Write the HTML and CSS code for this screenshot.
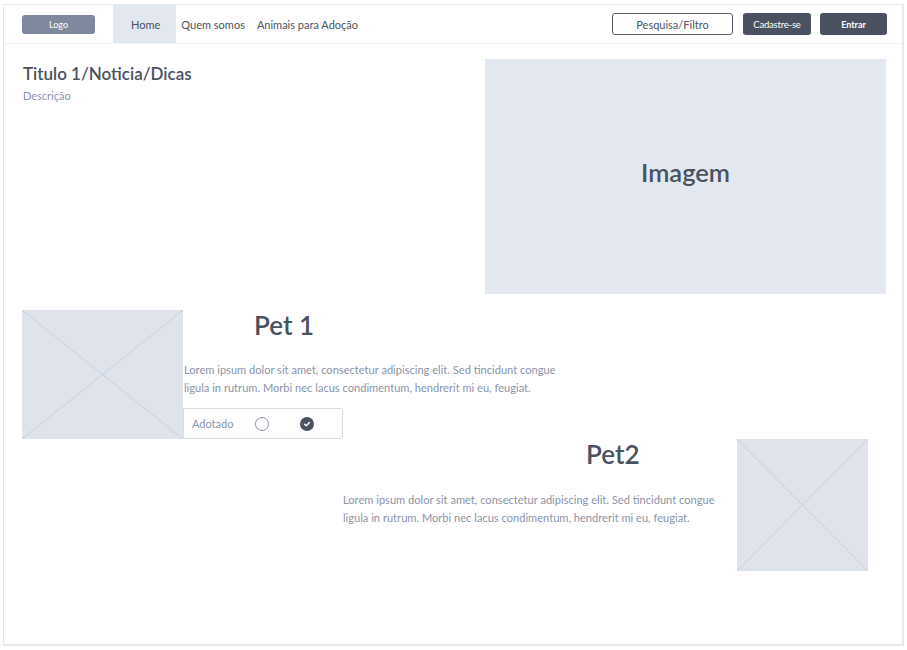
FILE: index.html
```html
<!DOCTYPE html>
<html lang="pt">
<head>
<meta charset="utf-8">
<title>Adoção de Animais</title>
<link rel="stylesheet" href="styles.css">
</head>
<body>
<div class="frame">
  <header class="nav">
    <div class="logo">Logo</div>
    <nav class="links">
      <a class="link active">Home</a>
      <a class="link">Quem somos</a>
      <a class="link">Animais para Adoção</a>
    </nav>
    <div class="actions">
      <div class="search">Pesquisa/Filtro</div>
      <div class="btn btn-signup">Cadastre-se</div>
      <div class="btn btn-login">Entrar</div>
    </div>
  </header>

  <section class="hero">
    <div class="hero-text">
      <h1 class="title">Titulo 1/Noticia/Dicas</h1>
      <p class="desc">Descrição</p>
    </div>
    <div class="hero-image">Imagem</div>
  </section>

  <section class="pet pet1">
    <div class="placeholder ph1">
      <svg viewBox="0 0 161 129" preserveAspectRatio="none"><line x1="0" y1="0" x2="161" y2="129"/><line x1="161" y1="0" x2="0" y2="129"/></svg>
    </div>
    <div class="pet-body">
      <h2 class="pet-name name1">Pet 1</h2>
      <p class="lorem">Lorem ipsum dolor sit amet, consectetur adipiscing elit. Sed tincidunt congue<br>ligula in rutrum. Morbi nec lacus condimentum, hendrerit mi eu, feugiat.</p>
      <div class="adopt">
        <span class="adopt-label">Adotado</span>
        <span class="radio"></span>
        <span class="check">
          <svg viewBox="0 0 14 14"><circle cx="7" cy="7" r="7" fill="#4a5261"/><path d="M4.6 7.2 L6.3 8.8 L9.4 5.6" fill="none" stroke="#fff" stroke-width="1.5" stroke-linecap="round" stroke-linejoin="round"/></svg>
        </span>
      </div>
    </div>
  </section>

  <section class="pet pet2">
    <div class="pet-body body2">
      <h2 class="pet-name name2">Pet2</h2>
      <p class="lorem lorem2">Lorem ipsum dolor sit amet, consectetur adipiscing elit. Sed tincidunt congue<br>ligula in rutrum. Morbi nec lacus condimentum, hendrerit mi eu, feugiat.</p>
    </div>
    <div class="placeholder ph2">
      <svg viewBox="0 0 131 132" preserveAspectRatio="none"><line x1="0" y1="0" x2="131" y2="132"/><line x1="131" y1="0" x2="0" y2="132"/></svg>
    </div>
  </section>
</div>
</body>
</html>
```

FILE: styles.css
```css
* { box-sizing: border-box; }
html, body { margin: 0; padding: 0; background: #ffffff; }
body {
  font-family: Lato, "Open Sans", "Liberation Sans", sans-serif;
  color: #4a5261;
}
.frame {
  margin: 4px 3px 4px 3px;
  width: 901px;
  height: 642px;
  border: 1px solid #e4e8ef;
  border-right-width: 2px;
  border-bottom-width: 2px;
  background: #fff;
}

/* nav */
.nav {
  display: flex;
  align-items: center;
  height: 39px;
  border-bottom: 1px solid #f1f3f6;
  padding-left: 18px;
  padding-right: 15px;
}
.logo {
  width: 73px;
  height: 19px;
  background: #7e899e;
  border-radius: 3px;
  color: #fff;
  font-size: 9px;
  display: flex;
  align-items: center;
  justify-content: center;
}
.links {
  display: flex;
  align-self: stretch;
  margin-left: 18px;
}
.link {
  display: flex;
  align-items: center;
  padding: 0 6px;
  font-size: 11px;
  color: #4a5261;
}
.link.active {
  background: #e3e7f0;
  padding: 0 16px 0 18px;
  margin-right: 5px;
}
.link.active + .link { padding-left: 0; }
.actions {
  margin-left: auto;
  display: flex;
  align-items: center;
  gap: 9px;
}
.search {
  width: 121px;
  height: 22px;
  border: 1px solid #5a6270;
  border-radius: 3px;
  font-size: 11px;
  display: flex;
  align-items: center;
  justify-content: center;
  color: #4a5261;
  margin-right: 1px;
}
.btn {
  height: 22px;
  border-radius: 3px;
  background: #4a5261;
  color: #fff;
  font-size: 9.5px;
  display: flex;
  align-items: center;
  justify-content: center;
}
.btn-signup { width: 68px; letter-spacing: -0.2px; }
.btn-login { width: 67px; font-weight: 700; font-size: 9px; }

/* hero */
.hero {
  display: flex;
  justify-content: space-between;
  padding: 15px 16px 0 19px;
}
.hero-text { padding-top: 5px; }
.title {
  margin: 0;
  font-size: 17px;
  font-weight: 600;
  line-height: 20px;
  color: #4a5261;
}
.desc {
  margin: 5px 0 0;
  font-size: 11px;
  color: #8a94ad;
}
.hero-image {
  width: 401px;
  height: 235px;
  background: #e3e7f0;
  display: flex;
  align-items: center;
  justify-content: center;
  padding-bottom: 9px;
  font-size: 25.5px;
  font-weight: 600;
  color: #4a5261;
}

/* pets */
.pet { display: flex; }
.pet1 { padding: 16px 0 0 18px; }
.placeholder {
  background: #dfe4ec;
  flex: none;
}
.placeholder svg { display: block; width: 100%; height: 100%; }
.placeholder line { stroke: #c8cfdb; stroke-width: 1; }
.ph1 { width: 161px; height: 129px; }
.ph2 { width: 131px; height: 132px; margin-left: 22px; }
.pet-body { display: flex; flex-direction: column; }
.pet-name {
  margin: 0;
  font-size: 26px;
  font-weight: 600;
  line-height: 30px;
  color: #4a5261;
}
.name1 { margin-left: 71px; }
.lorem {
  margin: 0;
  font-size: 11.1px;
  line-height: 18px;
  color: #8a94a8;
}
.pet1 .lorem { margin-top: 21px; margin-left: 1px; }
.adopt {
  margin-top: 11px;
  width: 160px;
  height: 31px;
  border: 1px solid #d6dbe4;
  border-radius: 0 3px 3px 0;
  display: flex;
  align-items: center;
  padding-left: 8px;
}
.adopt-label { font-size: 11px; color: #8a94a8; }
.radio {
  width: 14px;
  height: 14px;
  border: 1.3px solid #8a94a8;
  border-radius: 50%;
  margin-left: 22px;
}
.check { width: 14px; height: 14px; margin-left: 31px; }
.check svg { display: block; width: 14px; height: 14px; }

.pet2 { padding-left: 339px; }
.name2 { margin-left: 243px; }
.lorem2 { margin-top: 22px; }
```
